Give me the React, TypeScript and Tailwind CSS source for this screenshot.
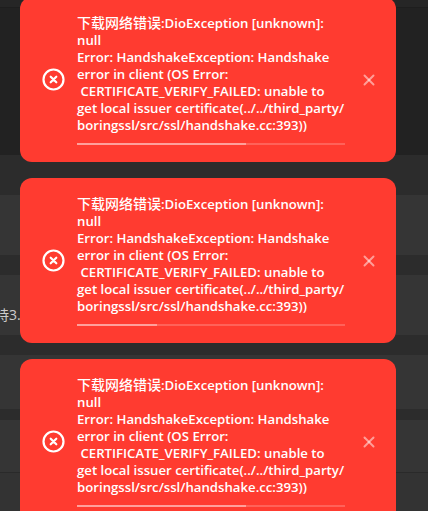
import React from 'react';
import { X } from 'lucide-react';

const Row = ({ className, children }: { className: string; children?: React.ReactNode }) => (
  <div className={className}>{children}</div>
);

const Toast = ({ progress }: { progress: string }) => (
  <div className="w-[376px] h-[165px] shrink-0 rounded-[12px] bg-[#ff3b30] flex items-center text-white">
    <div className="w-[57px] shrink-0 flex justify-center pl-[9px]">
      <svg width="23" height="23" viewBox="0 0 23 23" fill="none" stroke="white" strokeWidth="2.2" strokeLinecap="round">
        <circle cx="11.5" cy="11.5" r="10" />
        <path d="M8.7 8.7l5.6 5.6M14.3 8.7l-5.6 5.6" />
      </svg>
    </div>
    <div className="w-[268px] shrink-0 pt-[1px]">
      <div className="text-[13.2px] leading-[17px] font-semibold whitespace-pre -mt-[1px] [font-family:'Open_Sans','Noto_Sans_CJK_SC',sans-serif]">
        <div className="flex items-baseline">
          <span className="text-[14px] font-medium">下载网络错误</span>
          <span>:DioException [unknown]:</span>
        </div>
        <div>{'null\nError: HandshakeException: Handshake\nerror in client (OS Error:\n CERTIFICATE_VERIFY_FAILED: unable to\nget local issuer certificate(../../third_party/\nboringssl/src/ssl/handshake.cc:393))'}</div>
      </div>
      <div className="mt-[9px] h-[2px] bg-white/20">
        <div className={`h-full bg-white/40 ${progress}`} />
      </div>
    </div>
    <div className="flex-1 flex justify-center pr-[3px]">
      <X size={18} strokeWidth={2.6} className="text-white/50" />
    </div>
  </div>
);

export default function App() {
  return (
    <div className="relative w-[428px] h-[511px] overflow-hidden bg-[#2c2c2c]">
      <div className="flex flex-col">
        <Row className="h-[8px] bg-[#262626] border-b border-[#1e1e1e]" />
        <Row className="h-[147px] bg-[#222222]" />
        <Row className="h-[40px] bg-[#2c2c2c]" />
        <Row className="h-[60px] bg-[#353535]" />
        <Row className="h-[20px] bg-[#2c2c2c]" />
        <Row className="h-[60px] bg-[#353535] flex items-end pb-[11px]">
          <span className="-ml-[5px] text-[14px] leading-[18px] whitespace-nowrap text-[#cccccc] [font-family:'Open_Sans','Noto_Sans_CJK_SC',sans-serif]">持3.0</span>
        </Row>
        <Row className="h-[20px] bg-[#2c2c2c]" />
        <Row className="h-[54px] bg-[#353535]" />
        <Row className="h-[11px] bg-[#2c2c2c]" />
        <Row className="h-[53px] bg-[#353535] border-b border-[#2a2a2a]" />
        <Row className="h-[38px] bg-[#333333]" />
      </div>
      <div className="absolute left-[20px] top-[-3px] flex flex-col gap-[16px]">
        <Toast progress="w-[63%]" />
        <Toast progress="w-[30%]" />
        <Toast progress="w-[63%]" />
      </div>
    </div>
  );
}
